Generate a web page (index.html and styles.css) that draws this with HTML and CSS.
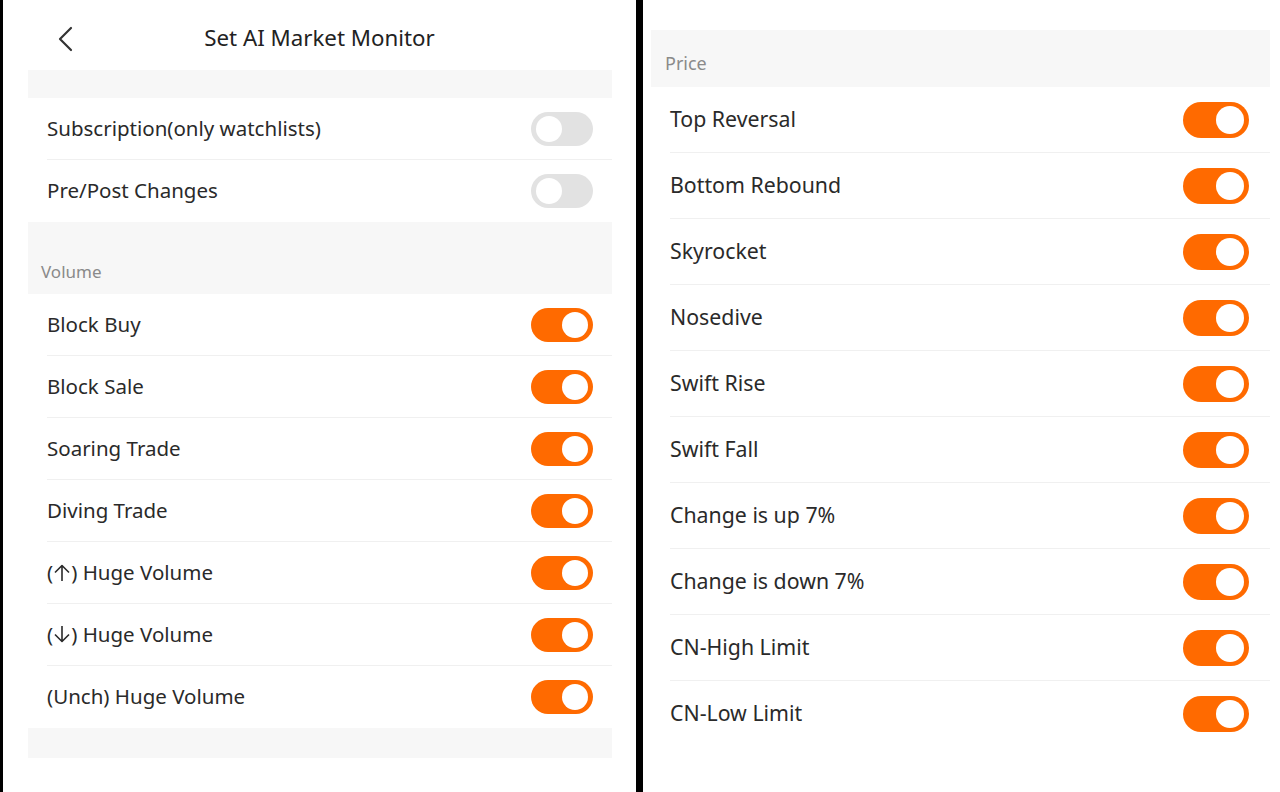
FILE: index.html
```html
<!DOCTYPE html>
<html>
<head>
<meta charset="utf-8">
<link rel="stylesheet" href="styles.css">
</head>
<body>
<div class="screen left">
  <div class="header">
    <svg class="back" width="18" height="26" viewBox="0 0 18 26"><path d="M15 2 L4 13 L15 24" fill="none" stroke="#333" stroke-width="2.2" stroke-linecap="round" stroke-linejoin="round"/></svg>
    <div class="title">Set AI Market Monitor</div>
  </div>
  <div class="col">
    <div class="gap-top"></div>
    <div class="row"><span>Subscription(only watchlists)</span><i class="tg off"></i></div>
    <div class="row last"><span>Pre/Post Changes</span><i class="tg off"></i></div>
    <div class="section">Volume</div>
    <div class="row"><span>Block Buy</span><i class="tg"></i></div>
    <div class="row"><span>Block Sale</span><i class="tg"></i></div>
    <div class="row"><span>Soaring Trade</span><i class="tg"></i></div>
    <div class="row"><span>Diving Trade</span><i class="tg"></i></div>
    <div class="row"><span>(<svg class="arw" width="16" height="17" viewBox="0 0 16 17"><path d="M8 1.5 V17 M1 8.5 L8 1.5 L15 8.5" fill="none" stroke="#2a2a2a" stroke-width="1.6" stroke-linejoin="round"/></svg>) Huge Volume</span><i class="tg"></i></div>
    <div class="row"><span>(<svg class="arw" width="16" height="17" viewBox="0 0 16 17"><path d="M8 0 V15.5 M1 8.5 L8 15.5 L15 8.5" fill="none" stroke="#2a2a2a" stroke-width="1.6" stroke-linejoin="round"/></svg>) Huge Volume</span><i class="tg"></i></div>
    <div class="row last"><span>(Unch) Huge Volume</span><i class="tg"></i></div>
    <div class="gap-bottom"></div>
  </div>
</div>
<div class="screen right">
  <div class="col">
    <div class="section">Price</div>
    <div class="row"><span>Top Reversal</span><i class="tg"></i></div>
    <div class="row"><span>Bottom Rebound</span><i class="tg"></i></div>
    <div class="row"><span>Skyrocket</span><i class="tg"></i></div>
    <div class="row"><span>Nosedive</span><i class="tg"></i></div>
    <div class="row"><span>Swift Rise</span><i class="tg"></i></div>
    <div class="row"><span>Swift Fall</span><i class="tg"></i></div>
    <div class="row"><span>Change is up 7%</span><i class="tg"></i></div>
    <div class="row"><span>Change is down 7%</span><i class="tg"></i></div>
    <div class="row"><span>CN-High Limit</span><i class="tg"></i></div>
    <div class="row last"><span>CN-Low Limit</span><i class="tg"></i></div>
  </div>
</div>
</body>
</html>
```
FILE: styles.css
```css
html, body { margin: 0; padding: 0; }
body {
  background: #000;
  display: flex;
  height: 792px;
  overflow: hidden;
  font-family: "Noto Sans", Roboto, sans-serif;
  color: #2a2a2a;
}
.screen { background: #fff; height: 792px; }
.left { margin-left: 3px; width: 633px; }
.right { margin-left: 7px; width: 637px; padding-top: 30px; box-sizing: border-box; }

.header {
  height: 70px;
  position: relative;
  display: flex;
  align-items: center;
  justify-content: center;
}
.back { position: absolute; left: 53px; top: 26px; }
.title { font-size: 22.3px; color: #222; padding-top: 4px; }

.left .col { margin-left: 25px; width: 584px; }
.right .col { margin-left: 8px; width: 619px; }

.gap-top { height: 28px; background: #f7f7f7; }
.gap-bottom { height: 30px; background: #f7f7f7; }

.section {
  background: #f7f7f7;
  color: #8a8a8a;
  font-size: 17px;
  display: flex;
  align-items: flex-end;
}
.left .section { height: 72px; padding-left: 13px; padding-bottom: 11px; box-sizing: border-box; }
.right .section { height: 57px; padding-left: 14px; padding-bottom: 12px; box-sizing: border-box; font-size: 18px; }

.row {
  display: flex;
  align-items: center;
  justify-content: space-between;
  position: relative;
  font-size: 20.5px;
  line-height: 1;
}
.row > span { padding-bottom: 2px; }
.row::after {
  content: "";
  position: absolute;
  bottom: 0;
  right: 0;
  height: 1px;
  background: #f0f0f0;
}
.row.last::after { display: none; }
.left .row { height: 62px; padding: 0 19px; }
.left .row::after { left: 19px; }
.right .row { height: 66px; padding: 0 21px 0 19px; font-size: 21.3px; }
.right .row::after { left: 19px; }

.arw {
  display: inline-block;
  vertical-align: -1px;
  margin: 0 1px;
}

.tg {
  display: block;
  position: relative;
  background: #ff6a00;
  border-radius: 18px;
}
.tg::after {
  content: "";
  position: absolute;
  top: 4px;
  background: #fff;
  border-radius: 50%;
}
.left .tg { width: 62px; height: 34px; }
.left .tg::after { width: 26px; height: 26px; right: 5px; }
.left .tg.off { background: #e2e2e2; }
.left .tg.off::after { right: auto; left: 5px; }
.right .tg { width: 66px; height: 36px; }
.right .tg::after { width: 28px; height: 28px; right: 5px; }
```
